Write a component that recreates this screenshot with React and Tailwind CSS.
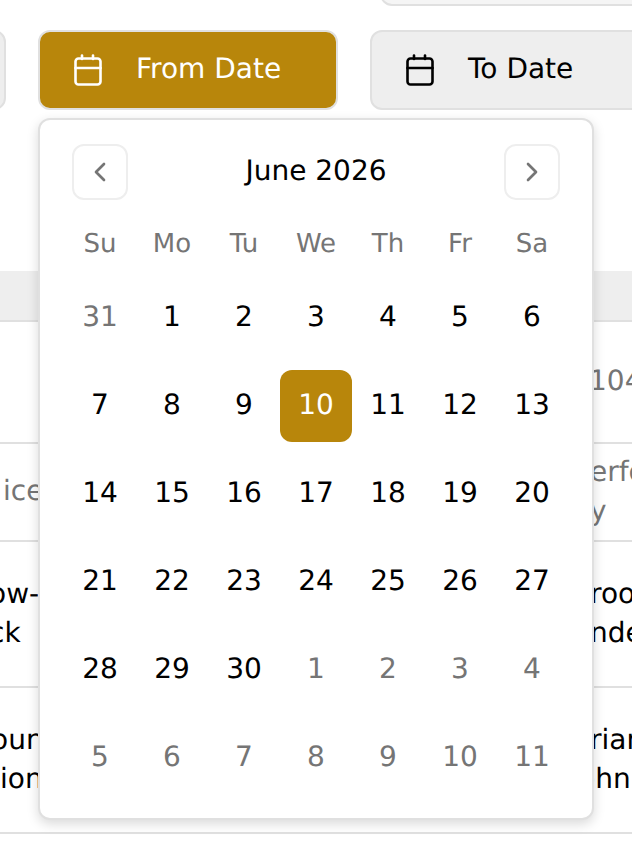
import React from 'react';
import { ChevronLeft, ChevronRight } from 'lucide-react';

const weekDays = ['Su', 'Mo', 'Tu', 'We', 'Th', 'Fr', 'Sa'];

const days = [
  ['31', true], ['1'], ['2'], ['3'], ['4'], ['5'], ['6'],
  ['7'], ['8'], ['9'], ['10'], ['11'], ['12'], ['13'],
  ['14'], ['15'], ['16'], ['17'], ['18'], ['19'], ['20'],
  ['21'], ['22'], ['23'], ['24'], ['25'], ['26'], ['27'],
  ['28'], ['29'], ['30'], ['1', true], ['2', true], ['3', true], ['4', true],
  ['5', true], ['6', true], ['7', true], ['8', true], ['9', true], ['10', true], ['11', true],
];

const rows = [
  { h: 'h-[122px]', left: [], leftPad: 'pl-[3px]', right: ['104'], rightPad: 'w-[43px]', muted: true },
  { h: 'h-[98px]', left: ['ice'], leftPad: 'pl-[3px]', right: ['erfo', 'y'], rightPad: 'w-[42px]', muted: true },
  { h: 'h-[146px]', left: ['ow-', 'ck'], leftPad: '-ml-[11px]', right: ['roo', 'nde'], rightPad: 'w-[42px]' },
  { h: 'h-[146px]', left: ['oun', 'ion'], leftPad: '-ml-[9px]', leftIndent: 'ml-[9px]', right: ['rian', 'ohn'], rightPad: 'w-[42px]', rightIndent: '-ml-[12px]' },
];

function CalendarIcon({ className }) {
  return (
    <svg width="28" height="32" viewBox="0 0 28 32" fill="none" stroke="currentColor" strokeWidth="2.6" strokeLinecap="round" strokeLinejoin="round" className={className}>
      <rect x="1.5" y="4.5" width="25" height="26" rx="3" />
      <path d="M1.5 14H26.5" />
      <path d="M8 1.5V5" />
      <path d="M19 1.5V5" />
    </svg>
  );
}

function DateButton({ label, active }) {
  return (
    <div className={`h-[80px] w-[300px] shrink-0 rounded-[12px] border-2 border-[#e0e0e0] flex items-center pl-[34px] gap-[34px] text-[28px] pb-[2px] ${active ? 'bg-[#b8860b] text-white' : 'bg-[#eeeeee] text-black'}`}>
      <CalendarIcon className="shrink-0 mt-[2px]" />
      <span>{label}</span>
    </div>
  );
}

function NavButton({ children }) {
  return (
    <div className="w-[56px] h-[56px] rounded-[12px] border-2 border-[#eeeeee] bg-white flex items-center justify-center text-[#757575]">
      {children}
    </div>
  );
}

function Cell({ lines, muted, lastIndent }) {
  return (
    <div className={`flex flex-col justify-center items-start text-[28px] leading-[39px] whitespace-nowrap pb-[3px] ${muted ? 'text-[#757575]' : 'text-black'}`}>
      {lines.map((l, i) => (
        <span key={i} className={i === lines.length - 1 ? lastIndent : ''}>{l}</span>
      ))}
    </div>
  );
}

export default function App() {
  return (
    <div className="relative w-[632px] h-[858px] overflow-hidden bg-white font-['DejaVu_Sans',sans-serif] [text-rendering:geometricPrecision]">
      <div className="ml-[380px] -mt-[20px] w-[300px] h-[26px] rounded-[12px] border-2 border-[#e0e0e0] bg-[#f5f5f5]" />

      <div className="flex gap-[32px] -ml-[294px] mt-[24px]">
        <DateButton label="" />
        <DateButton label="From Date" active />
        <DateButton label="To Date" />
      </div>

      {/* table behind the picker */}
      <div className="mt-[160px] pt-[1px]">
        <div className="h-[51px] bg-[#eeeeee] border-b-2 border-[#e0e0e0]" />
        {rows.map((row, i) => (
          <div key={i} className={`${row.h} flex justify-between border-b-2 border-[#e0e0e0]`}>
            <div className={`w-[40px] flex ${row.leftPad}`}>
              <Cell lines={row.left} muted={row.muted} lastIndent={row.leftIndent} />
            </div>
            <div className={`flex ${row.rightPad}`}>
              <Cell lines={row.right} muted={row.muted} lastIndent={row.rightIndent} />
            </div>
          </div>
        ))}
      </div>

      {/* date picker popover */}
      <div className="absolute left-[38px] top-[118px] w-[556px] h-[702px] rounded-[12px] border-2 border-[#e0e0e0] bg-white shadow-[0_4px_12px_rgba(0,0,0,0.15)] px-[24px] pt-[24px]">
        <div className="flex items-center justify-between px-[8px]">
          <NavButton><ChevronLeft size={32} strokeWidth={2} /></NavButton>
          <span className="text-[28px] text-black pb-[2px]">June 2026</span>
          <NavButton><ChevronRight size={32} strokeWidth={2} /></NavButton>
        </div>
        <div className="grid grid-cols-[repeat(7,72px)] mt-[16px]">
          {weekDays.map((d) => (
            <div key={d} className="h-[56px] flex items-center justify-center text-[26px] text-[#757575]">{d}</div>
          ))}
        </div>
        <div className="grid grid-cols-[repeat(7,72px)] auto-rows-[88px] pt-[2px]">
          {days.map(([d, muted], i) => {
            const selected = i === 10;
            return (
              <div key={i} className="flex items-center justify-center">
                <div className={`w-[72px] h-[72px] rounded-[12px] flex items-center justify-center text-[28px] pb-[2px] ${selected ? 'bg-[#b8860b] text-white' : muted ? 'text-[#757575]' : 'text-black'}`}>
                  {d}
                </div>
              </div>
            );
          })}
        </div>
      </div>
    </div>
  );
}
